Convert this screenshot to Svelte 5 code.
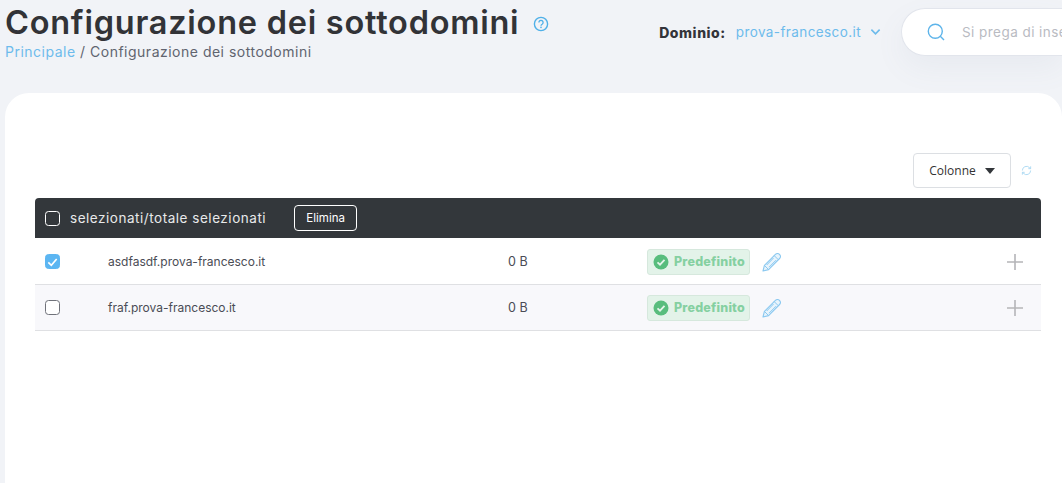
<script>
  const rows = [
    { name: 'asdfasdf.prova-francesco.it', checked: true },
    { name: 'fraf.prova-francesco.it', checked: false }
  ];
</script>

<div class="page">
  <header class="top">
    <div class="heading">
      <div class="title-line">
        <h1>Configurazione dei sottodomini</h1>
        <svg class="help" viewBox="0 0 16 16" width="16" height="16" aria-hidden="true">
          <circle cx="8" cy="8" r="6.6" fill="none" stroke="#4fb0e8" stroke-width="1.4" />
          <path d="M5.9 6.4a2.1 2.1 0 1 1 3.2 1.8c-.7.4-1.1.8-1.1 1.500" fill="none" stroke="#4fb0e8" stroke-width="1.3" />
          <circle cx="8" cy="11.4" r=".8" fill="#4fb0e8" />
        </svg>
      </div>
      <div class="crumbs"><span class="link">Principale</span> / Configurazione dei sottodomini</div>
    </div>
    <div class="tools">
      <div class="domain">
        <b>Dominio:</b>
        <span class="link">prova-francesco.it</span>
        <svg viewBox="0 0 12 8" width="11" height="8" aria-hidden="true"><path d="M1.5 1.5 6 6l4.500-4.500" fill="none" stroke="#6dbbec" stroke-width="1.800" /></svg>
      </div>
      <div class="search">
        <svg viewBox="0 0 18 18" width="18" height="18" aria-hidden="true">
          <circle cx="8.300" cy="8.300" r="7" fill="none" stroke="#5db4ea" stroke-width="1.400" />
          <path d="M13.300 13.300 17 17" stroke="#5db4ea" stroke-width="1.400" />
        </svg>
        <span>Si prega di inserire</span>
      </div>
    </div>
  </header>

  <main class="card">
    <div class="actions">
      <button class="columns">Colonne <i class="caret"></i></button>
      <svg class="refresh" viewBox="0 0 12 12" width="11" height="11" aria-hidden="true">
        <path d="M1.500 6a4.500 4.500 0 0 1 7.700-3.200L10.500 4M10.500 6a4.500 4.500 0 0 1-7.700 3.200L1.500 8M10.500 1.500V4H8M1.500 10.500V8H4" fill="none" stroke="#a9d8f2" stroke-width="1" />
      </svg>
    </div>
    <div class="table">
      <div class="thead">
        <span class="box head-box"></span>
        <span class="selected">selezionati/totale selezionati</span>
        <button class="delete">Elimina</button>
      </div>
      {#each rows as row, i}
        <div class="row" class:alt={i === 1}>
          {#if row.checked}
            <span class="box on">
              <svg viewBox="0 0 14 14" width="14" height="14" aria-hidden="true"><path d="M2.500 7.500 5.700 10.500 11.500 3.800" fill="none" stroke="#fff" stroke-width="1.800" /></svg>
            </span>
          {:else}
            <span class="box"></span>
          {/if}
          <span class="name">{row.name}</span>
          <span class="size">0 B</span>
          <span class="badge">
            <svg viewBox="0 0 16 16" width="16" height="16" aria-hidden="true">
              <circle cx="8" cy="8" r="7.500" fill="#58bd7d" />
              <path d="M4.500 8.300 7 10.700 11.500 5.800" fill="none" stroke="#e4f4ea" stroke-width="1.800" />
            </svg>
            Predefinito
          </span>
          <svg class="pencil" viewBox="0 0 20 20" width="20" height="20" aria-hidden="true">
            <path d="M1 19 2.400 13.400 13.400 2.400C14.500 1.300 16.200 1 17.500 2.300 18.900 3.700 18.700 5.400 17.600 6.500L6.600 17.600 1 19Z" fill="#e8f4fc" stroke="#8ac8f0" stroke-width="1.100" stroke-linejoin="round" />
            <path d="M2.400 13.400 6.600 17.600M12.200 3.600 16.400 7.800M11.500 6 4.700 13M14 8.200 7 15.200" fill="none" stroke="#8ac8f0" stroke-width="1" />
          </svg>
          <svg class="plus" viewBox="0 0 16 16" width="16" height="16" aria-hidden="true"><path d="M8 0V16M0 8H16" stroke="#b5b5b8" stroke-width="1.600" /></svg>
        </div>
      {/each}
    </div>
  </main>
</div>

<style>
  :global(body) { margin: 0; }
  .page {
    width: 1062px;
    height: 483px;
    overflow: hidden;
    background: #f1f3f7;
    font-family: Inter, "Noto Sans", sans-serif;
    color: #333;
    display: flex;
    flex-direction: column;
  }
  .top { display: flex; justify-content: space-between; height: 93px; padding-left: 5px; box-sizing: border-box; flex: none; }
  .title-line { display: flex; align-items: center; gap: 14px; height: 44px; }
  h1 { margin: 0; font-size: 32.500px; font-weight: 600; letter-spacing: .75px; color: #323337; white-space: nowrap; }
  .help { margin-top: 3px; flex: none; }
  .crumbs { font-size: 14px; line-height: 16px; color: #60646f; letter-spacing: .5px; }
  .link { color: #6dbbec; }
  .tools { display: flex; align-items: flex-start; padding-top: 8px; }
  .domain { display: flex; align-items: center; height: 48px; font-size: 13.500px; letter-spacing: .4px; gap: 10px; margin-right: 20px; }
  .domain b { font-weight: 800; font-size: 14px; letter-spacing: .55px; color: #33343a; }
  .domain svg { margin-left: -1px; flex: none; }
  .search {
    width: 161px;
    height: 48px;
    box-sizing: border-box;
    background: #fff;
    border: 1px solid #e2e5ec;
    border-right: 0;
    border-radius: 24px 0 0 24px;
    box-shadow: 0 12px 30px rgba(120, 125, 150, .07);
    display: flex;
    align-items: center;
    gap: 17px;
    padding-left: 25px;
    font-size: 13.500px;
    letter-spacing: .45px;
    color: #b9bbc2;
    white-space: nowrap;
    overflow: hidden;
  }
  .search svg { flex: none; }
  .card {
    flex: 1;
    background: #fff;
    margin-left: 5px;
    border-radius: 24px 24px 0 0;
    padding: 60px 21px 0 30px;
  }
  .actions { display: flex; justify-content: flex-end; align-items: center; height: 35px; gap: 10px; padding-right: 9px; margin-bottom: 10px; }
  .columns {
    width: 98px;
    height: 35px;
    background: #fff;
    border: 1px solid #dcdfe3;
    border-radius: 4px;
    font: 12px "Open Sans", sans-serif;
    color: #333;
    display: flex;
    align-items: center;
    justify-content: center;
    gap: 9px;
    padding: 0;
  }
  .caret { width: 0; height: 0; border: 5.500px solid transparent; border-top: 6px solid #33363a; border-bottom: 0; }
  .table { width: 1006px; }
  .thead {
    height: 40px;
    margin-bottom: 1px;
    background: #33373b;
    border-radius: 4px 4px 0 0;
    display: flex;
    align-items: center;
    padding-left: 10px;
    color: #fff;
    font-size: 13.500px;
    letter-spacing: .53px;
  }
  .box {
    width: 13px;
    height: 13px;
    border: 1px solid #70727a;
    border-radius: 3.500px;
    display: inline-flex;
    flex: none;
    background: #fff;
  }
  .head-box { background: transparent; border-color: #fff; }
  .selected { margin-left: 10px; color: #e8e9ea; }
  .delete {
    margin-left: 28px;
    width: 63px;
    height: 26px;
    background: transparent;
    border: 1px solid #fff;
    border-radius: 4px;
    color: #fff;
    font: 11.500px Inter, sans-serif;
    padding: 0;
  }
  .row {
    height: 46px;
    box-sizing: border-box;
    border-bottom: 1px solid #dfe0e3;
    display: flex;
    align-items: center;
    padding-left: 10px;
    font-size: 12px;
    color: #4a4c55;
  }
  .row.alt { background: #f8f8fb; }
  .box.on { background: #5cb6f2; border-color: #5cb6f2; }
  .name { margin-left: 48px; width: 400px; }
  .size { width: 139px; font-size: 12.500px; }
  .badge {
    width: 103px;
    height: 26px;
    box-sizing: border-box;
    background: #e3f3e9;
    border: 1px solid #d6e8dd;
    border-radius: 3px;
    display: flex;
    align-items: center;
    gap: 5px;
    padding-left: 5px;
    font-size: 12.500px;
    font-weight: 800;
    letter-spacing: .2px;
    color: #85d0a1;
    white-space: nowrap;
  }
  .pencil { margin-left: 12px; flex: none; }
  .plus { margin-left: auto; margin-right: 18px; }
</style>
